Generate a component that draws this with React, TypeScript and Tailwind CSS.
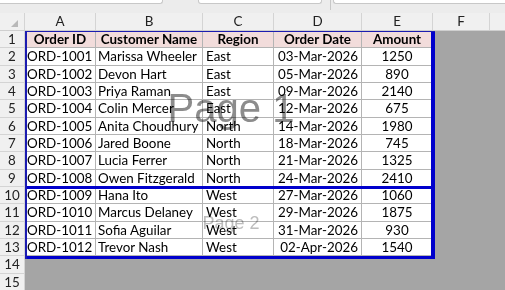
import React from 'react';

const rows = [
  ['ORD-1001', 'Marissa Wheeler', 'East', '03-Mar-2026', '1250'],
  ['ORD-1002', 'Devon Hart', 'East', '05-Mar-2026', '890'],
  ['ORD-1003', 'Priya Raman', 'East', '09-Mar-2026', '2140'],
  ['ORD-1004', 'Colin Mercer', 'East', '12-Mar-2026', '675'],
  ['ORD-1005', 'Anita Choudhury', 'North', '14-Mar-2026', '1980'],
  ['ORD-1006', 'Jared Boone', 'North', '18-Mar-2026', '745'],
  ['ORD-1007', 'Lucia Ferrer', 'North', '21-Mar-2026', '1325'],
  ['ORD-1008', 'Owen Fitzgerald', 'North', '24-Mar-2026', '2410'],
  ['ORD-1009', 'Hana Ito', 'West', '27-Mar-2026', '1060'],
  ['ORD-1010', 'Marcus Delaney', 'West', '29-Mar-2026', '1875'],
  ['ORD-1011', 'Sofia Aguilar', 'West', '31-Mar-2026', '930'],
  ['ORD-1012', 'Trevor Nash', 'West', '02-Apr-2026', '1540'],
];

const headers = ['Order ID', 'Customer Name', 'Region', 'Order Date', 'Amount'];

// column widths: A..E data columns
const colW = ['w-[71px]', 'w-[107px]', 'w-[71px]', 'w-[88px]', 'w-[71px]'];
const align = ['justify-start pl-[2px]', 'justify-start pl-[2px]', 'justify-start pl-[3px]', 'justify-end pr-[3px]', 'justify-center'];

function RowNum({ n }: { n: number }) {
  return (
    <div className="w-[25px] shrink-0 h-full flex items-center justify-center bg-[#f0f0f0] border-r border-b border-[#d4d4d4] text-[#222]">
      {n}
    </div>
  );
}

export default function App() {
  return (
    <div
      className="w-[505px] h-[290px] overflow-hidden bg-[#a5a5a5] text-[13.4px] text-black"
      style={{ fontFamily: 'Lato, "Open Sans", sans-serif' }}
    >
      {/* formula bar remnants */}
      <div className="h-[13px] bg-[#ececec] flex items-start">
        <div className="w-[163px] h-[4px] bg-white border-b border-r border-[#c8c8c8] rounded-br-[3px]" />
        <div className="ml-[35px] w-[124px] h-[4px] bg-white border-b border-x border-[#c8c8c8] rounded-b-[3px]" />
        <div className="ml-[8px] w-px h-[10px] bg-[#c8c8c8]" />
        <div className="ml-[2px] flex-1 h-[4px] bg-white border-b border-l border-[#c8c8c8] rounded-bl-[3px]" />
      </div>

      {/* column letters */}
      <div className="h-[18px] flex bg-[#f0f0f0] border-b border-[#cfcfcf] text-[#222]">
        <div className="w-[25px] shrink-0 border-r border-[#d4d4d4] flex items-end justify-end pr-[6px] pb-[3px]">
          <svg width="7" height="7" viewBox="0 0 7 7">
            <polygon points="7,0 7,7 0,7" fill="#b8b8b8" />
          </svg>
        </div>
        {['A', 'B', 'C', 'D', 'E'].map((c, i) => (
          <div key={c} className={`${colW[i]} shrink-0 border-r border-[#d4d4d4] flex items-center justify-center`}>
            {c}
          </div>
        ))}
        <div className="w-[57px] shrink-0 border-r border-[#d4d4d4] flex items-center justify-center">F</div>
        <div className="flex-1" />
      </div>

      <div className="relative">
        {/* header row */}
        <div className="h-[17.33px] flex">
          <RowNum n={1} />
          {headers.map((h, i) => (
            <div
              key={h}
              className={`${colW[i]} shrink-0 h-full flex items-center justify-center font-bold bg-[#f2dcdb] border-r border-b border-[#b4b4b4]`}
            >
              {h}
            </div>
          ))}
          <div className="flex-1" />
        </div>

        {rows.map((r, ri) => (
          <div key={r[0]} className="h-[17.33px] flex">
            <RowNum n={ri + 2} />
            {r.map((v, i) => (
              <div
                key={i}
                className={`${colW[i]} shrink-0 h-full flex items-center whitespace-nowrap ${align[i]} bg-white border-r border-b border-[#b4b4b4]`}
              >
                {v}
              </div>
            ))}
            <div className="flex-1" />
          </div>
        ))}

        {[14, 15].map((n) => (
          <div key={n} className="h-[17.33px] flex">
            <RowNum n={n} />
            <div className="flex-1" />
          </div>
        ))}

        {/* print area and page break overlay */}
        <div className="absolute left-[25px] top-0 w-[410px] h-[228px] border-l-2 border-t border-[#1c1cb0] pointer-events-none">
          <div className="absolute right-0 top-0 w-[4px] h-full bg-[#0000cc]" />
          <div className="absolute left-0 bottom-0 w-full h-[3px] bg-[#0000cc]" />
          <div className="absolute left-0 top-[154px] w-full h-[3px] bg-[#0000cc]" />
          <div className="absolute left-0 top-0 w-full h-[152px] flex items-center justify-center">
            <span
              className="text-[40px] text-[#8c8c8c] mix-blend-multiply leading-none"
              style={{ fontFamily: '"Liberation Sans", Arial, sans-serif' }}
            >
              Page 1
            </span>
          </div>
          <div className="absolute left-0 top-[156px] w-full h-[70px] flex items-center justify-center">
            <span
              className="text-[18px] text-[#bdbdbd] mix-blend-multiply leading-none"
              style={{ fontFamily: '"Liberation Sans", Arial, sans-serif' }}
            >
              Page 2
            </span>
          </div>
        </div>
      </div>
    </div>
  );
}
